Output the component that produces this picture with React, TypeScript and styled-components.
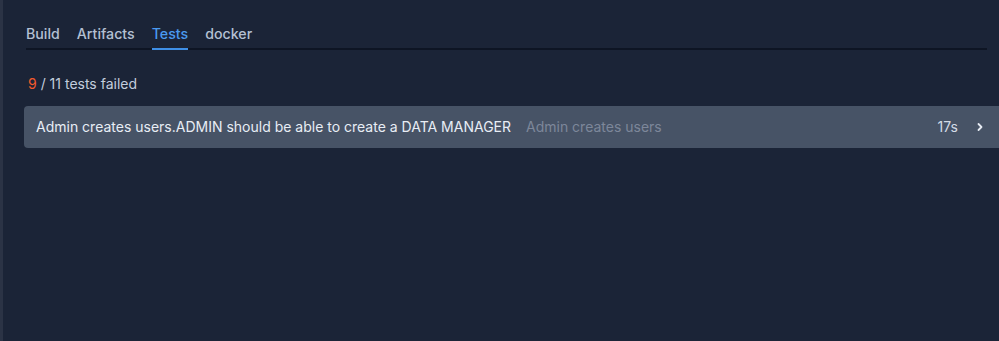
import React from "react";
import styled, { createGlobalStyle } from "styled-components";

const Global = createGlobalStyle`
  html, body { margin: 0; padding: 0; background: #1b2437; overflow: hidden; }
  body { font-family: Inter, "Noto Sans", "Liberation Sans", sans-serif; -webkit-font-smoothing: antialiased; }
`;

const Page = styled.div`
  height: 341px;
  box-sizing: border-box;
  border-left: 3px solid #2b3345;
  padding: 22px 12px 0 23px;
`;

const TabBar = styled.nav`
  display: flex;
  gap: 17px;
  border-bottom: 2px solid #0e1524;
`;

const Tab = styled.div<{ $active?: boolean }>`
  position: relative;
  font-size: 14.2px;
  font-weight: 500;
  line-height: 24px;
  padding-bottom: 2px;
  color: ${(p) => (p.$active ? "#4a9af0" : "#b4c0d3")};
  &::after {
    content: "";
    display: ${(p) => (p.$active ? "block" : "none")};
    position: absolute;
    left: 0;
    right: 0;
    bottom: -2px;
    height: 2px;
    background: #3f8fe6;
  }
`;

const Summary = styled.div`
  margin: 24px 0 0 2px;
  font-size: 14px;
  line-height: 20px;
  color: #c3cddd;
`;

const Failed = styled.span`
  color: #f2592c;
`;

const Row = styled.div`
  margin: 12px -12px 0 -2px;
  height: 42px;
  display: flex;
  align-items: center;
  padding: 0 13px 1px 12px;
  box-sizing: border-box;
  background: #475366;
  border-radius: 4px 0 0 4px;
  font-size: 14px;
`;

const Name = styled.span`
  color: #e8edf5;
`;

const Suite = styled.span`
  color: #7d879a;
  margin-left: 15px;
  flex: 1;
`;

const Duration = styled.span`
  color: #d4dbe7;
  margin-right: 16px;
`;

const Chevron = () => (
  <svg width="12" height="12" viewBox="0 0 12 12" fill="none">
    <path d="M4.5 3 L7.5 6 L4.5 9" stroke="#e6ebf3" strokeWidth="1.8" strokeLinecap="round" strokeLinejoin="round" />
  </svg>
);

export default function App() {
  return (
    <>
      <Global />
      <Page>
        <TabBar>
          <Tab>Build</Tab>
          <Tab>Artifacts</Tab>
          <Tab $active>Tests</Tab>
          <Tab>docker</Tab>
        </TabBar>
        <Summary>
          <Failed>9</Failed> / 11 tests failed
        </Summary>
        <Row>
          <Name>Admin creates users.ADMIN should be able to create a DATA MANAGER</Name>
          <Suite>Admin creates users</Suite>
          <Duration>17s</Duration>
          <Chevron />
        </Row>
      </Page>
    </>
  );
}
